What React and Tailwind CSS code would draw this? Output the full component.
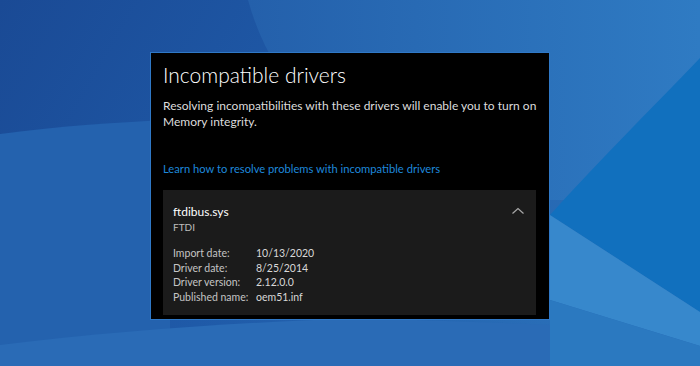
import React from "react";

const details = [
  ["Import date:", "10/13/2020"],
  ["Driver date:", "8/25/2014"],
  ["Driver version:", "2.12.0.0"],
  ["Published name:", "oem51.inf"],
];

function Wallpaper() {
  return (
    <svg className="absolute inset-0" width="700" height="366" viewBox="0 0 700 366">
      <defs>
        <linearGradient id="base" x1="0" y1="0" x2="1" y2="0.3">
          <stop offset="0" stopColor="#1a4a95" />
          <stop offset="0.5" stopColor="#1f5aa8" />
          <stop offset="1" stopColor="#2a6fb8" />
        </linearGradient>
        <linearGradient id="top" x1="0" y1="0" x2="1" y2="0">
          <stop offset="0" stopColor="#2460ab" />
          <stop offset="1" stopColor="#2f7bc3" />
        </linearGradient>
      </defs>
      <rect width="700" height="366" fill="url(#base)" />
      <path d="M248 0 C270 80 330 150 420 200 L700 200 L700 0 Z" fill="url(#top)" />
      <path d="M0 134 C60 126 120 122 170 120 L170 366 L0 366 Z" fill="#2462ae" />
      <path d="M0 345 C120 330 250 322 360 318 L700 330 L700 366 L0 366 Z" fill="#2a6bb6" />
      <path d="M700 58 C650 110 595 165 550 215 L700 312 Z" fill="#1170be" />
      <path d="M550 215 L700 312 L700 346 L550 300 Z" fill="#3788cc" />
      <path d="M550 300 L700 346 L700 366 L550 366 Z" fill="#2b79c0" />
    </svg>
  );
}

export default function App() {
  return (
    <div className="relative w-[700px] h-[366px] overflow-hidden" style={{ fontFamily: "Lato, 'Open Sans', sans-serif" }}>
      <Wallpaper />
      <div className="relative pt-[52px] pl-[150px]">
        <div className="w-[400px] h-[268px] bg-black border border-[#2f78c6] pl-[12px] pr-[6px] pt-[7px] flex flex-col">
          <h1 className="text-[21px] font-light text-white leading-[30px]">Incompatible drivers</h1>
          <p className="mt-[8px] text-[12px] leading-[16px] text-[#dcdcdc]">
            Resolving incompatibilities with these drivers will enable you to turn on Memory integrity.
          </p>
          <a className="mt-[32px] text-[11.2px] leading-[14px] text-[#1e88db]">
            Learn how to resolve problems with incompatible drivers
          </a>
          <div className="mt-[14px] w-[373px] h-[125px] bg-[#1b1b1b] pl-[10px] pr-[10px] pt-[14px] flex flex-col">
            <div className="flex items-start justify-between">
              <div>
                <div className="text-[12px] leading-[16px] text-white">ftdibus.sys</div>
                <div className="text-[10px] leading-[14px] text-[#bdbdbd]">FTDI</div>
              </div>
              <svg width="14" height="10" viewBox="0 0 14 10" className="mt-[2px] mr-[1px]">
                <path d="M1.5 7.5 L7 2.5 L12.5 7.5" fill="none" stroke="#a8a8a8" strokeWidth="1.2" />
              </svg>
            </div>
            <div className="mt-[12px] grid grid-cols-[83px_1fr] text-[10.5px] leading-[14.6px]">
              {details.map(([k, v]) => (
                <React.Fragment key={k}>
                  <span className="text-[#c4c4c4] whitespace-nowrap">{k}</span>
                  <span className="text-[#d8d8d8]">{v}</span>
                </React.Fragment>
              ))}
            </div>
          </div>
        </div>
      </div>
    </div>
  );
}
